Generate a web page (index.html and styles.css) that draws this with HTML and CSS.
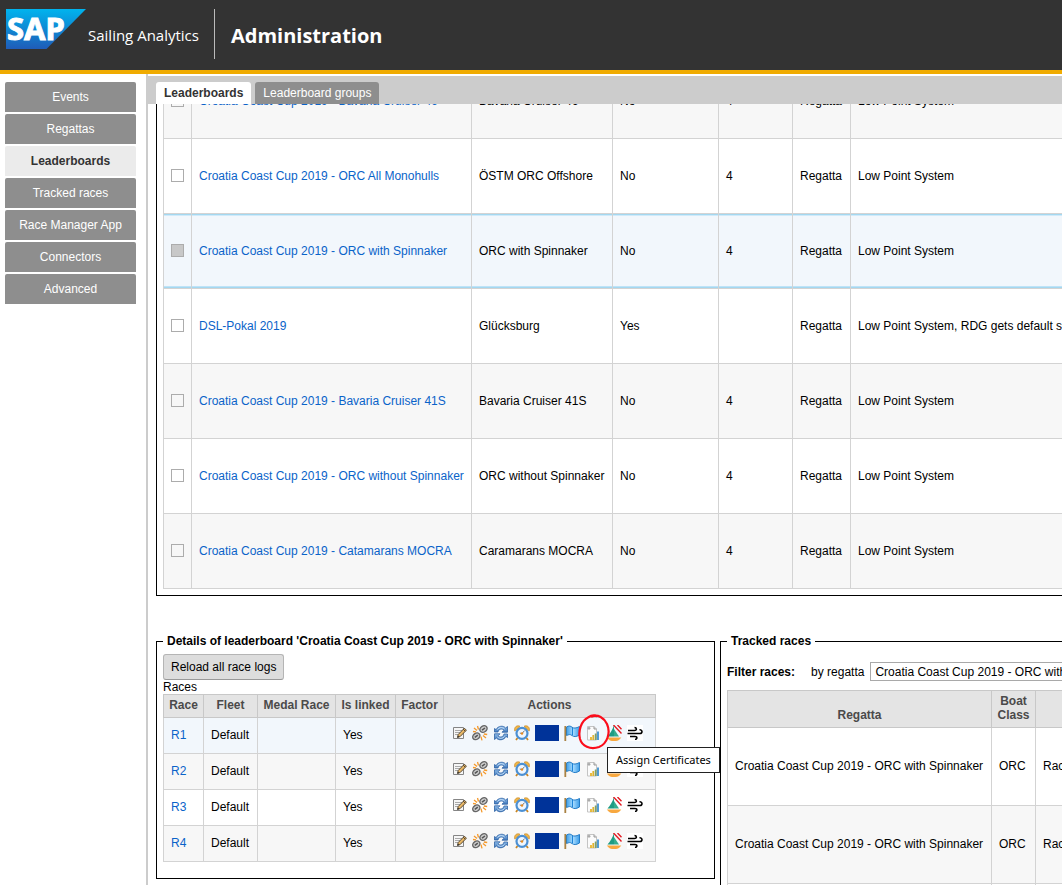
FILE: index.html
```html
<!DOCTYPE html>
<html lang="en">
<head>
<meta charset="utf-8">
<title>Administration</title>
<link rel="stylesheet" href="styles.css">
</head>
<body>
<svg class="sprite" aria-hidden="true">
  <defs>
    <linearGradient id="blue" x1="0" y1="0" x2="0" y2="1"><stop offset="0" stop-color="#8fbdea"/><stop offset="1" stop-color="#3f77bb"/></linearGradient>
    <linearGradient id="cloth" x1="0" y1="0" x2="1" y2="0"><stop offset="0" stop-color="#3f9fe8"/><stop offset=".5" stop-color="#a8dcff"/><stop offset="1" stop-color="#3b9ce8"/></linearGradient>
  </defs>
  <symbol id="edit" viewBox="0 0 16 16">
    <path d="M2.500 2.500h10v11h-10z" fill="#f6f6f6" stroke="#858585"/>
    <path d="M4 5.500h7M4 7.500h5M4 9.500h3" stroke="#aaa"/>
    <path d="M6.500 12.500l.7-3 6.200-6.300 2 2-6.200 6.300z" fill="#e9b866" stroke="#4a3c2a" stroke-width=".9"/>
    <path d="M6.500 12.500l.4-1.700 1.400 1.200z" fill="#222"/>
    <path d="M12.300 4.200l2 2" stroke="#4a3c2a"/>
  </symbol>
  <symbol id="unlink" viewBox="0 0 16 16">
    <g fill="#ccc" stroke="#666" stroke-width="1.400"><ellipse cx="11.500" cy="4" rx="3.800" ry="3" transform="rotate(-35 11.500 4)"/><ellipse cx="4.300" cy="11.300" rx="3.800" ry="3" transform="rotate(-35 4.300 11.300)"/></g>
    <path d="M10 5.200l3-2.200M2.800 12.400l3-2.200" stroke="#555" stroke-width="1.500"/>
    <path d="M2 3l3 2.500M5.500 1l1 3.500M1 6.500l3 .3M14 13l-3-2.500M10 15.300l-1-3.600M15.200 9.500l-3.400-.5" stroke="#f59a2c" stroke-width="1.300"/>
  </symbol>
  <symbol id="refresh" viewBox="0 0 16 16">
    <path d="M1.500 7V3.500L3 4.600C5 .7 10.500 .2 12.600 3L14.500 1.500V7.200H9L11 5.200C9 3 5.500 4 5 7z" fill="url(#blue)" stroke="#2d62a5" stroke-width=".8"/>
    <path d="M14.500 9V12.500L13 11.400C11 15.300 5.500 15.800 3.400 13L1.500 14.500V8.800H7L5 10.800C7 13 10.500 12 11 9z" fill="url(#blue)" stroke="#2d62a5" stroke-width=".8"/>
    <path d="M4.500 4.500C6 2.300 9.500 2 11.500 4M11.500 11.500C10 13.700 6.500 14 4.500 12" fill="none" stroke="#c9e2fa"/>
  </symbol>
  <symbol id="clock" viewBox="0 0 16 16">
    <path d="M3.500 13l-1.500 2M12.500 13l1.500 2" stroke="#c98421" stroke-width="1.800"/>
    <path d="M.8 6C-.5 2.500 3 -.5 6 1.300zM15.200 6C16.500 2.500 13 -.5 10 1.300z" fill="#efb648" stroke="#c98a28" stroke-width=".7"/>
    <circle cx="8" cy="8.300" r="5.500" fill="#eef6ff" stroke="#4c90d3" stroke-width="2.200"/>
    <path d="M8 8.600l2.500-3M8 8.600L5.800 8" stroke="#777" fill="none"/>
    <circle cx="8" cy="8.500" r="1.200" fill="#e58a20"/>
  </symbol>
  <symbol id="flag" viewBox="0 0 16 16">
    <path d="M2.500 2C5 .5 6.500 1 8 2.200S12 3.500 15.500 1.500V10C12 12 10 12 8 10.500S5 9.500 2.500 10.500z" fill="url(#cloth)" stroke="#237cc7"/>
    <path d="M8.500 3v7" stroke="#1d83d8"/>
    <path d="M1.300 1v15" stroke="#a98243" stroke-width="1.800"/>
  </symbol>
  <symbol id="certificate" viewBox="0 0 16 16">
    <path d="M2.500 1.500h6.500l2.500 2.500v11h-9z" fill="#fbfbfb" stroke="#c4c4c4"/>
    <path d="M9 1.500v2.500h2.500" fill="#ddd" stroke="#999"/>
    <circle cx="4" cy="3.300" r="1.400" fill="#aaa"/>
    <path d="M6 15v-3" stroke="#e7b52c" stroke-width="1.800"/>
    <path d="M8.300 15v-5" stroke="#dfb32f" stroke-width="1.800"/>
    <path d="M10.700 15V8.500" stroke="#7da06a" stroke-width="1.800"/>
    <path d="M13 15V6.500" stroke="#3d8fd0" stroke-width="1.800"/>
  </symbol>
  <symbol id="boat" viewBox="0 0 16 16">
    <path d="M8 0v11.500H1.500C4 8.500 6.500 5 8 0z" fill="#1f9c84"/>
    <path d="M8 4l5 7.500H8z" fill="#35ad8e"/>
    <path d="M.8 12.500h14.500C13.500 15.500 11 16 8 16S2.800 15.500.8 12.500z" fill="#f8a83f"/>
    <path d="M7.500 0l8 8.500M11.500 0l4 4.300" stroke="#e31b23" stroke-width="1.400"/>
  </symbol>
  <symbol id="wind" viewBox="0 0 16 16">
    <path d="M0 0h16v16H0z" fill="#fff"/>
    <path d="M1 5.500h6.500c2.600 0 2.400-3 0-3M.5 8.500h12.500c2.800 0 2.600-4-.5-3.700M3 11.500h5c2.600 0 2.400 3 0 2.800" fill="none" stroke="#000" stroke-width="1.600"/>
  </symbol>
</svg>

<header class="masthead">
  <svg class="logo" viewBox="0 0 80 40" role="img" aria-label="SAP">
    <defs><linearGradient id="sap" x1="0" y1="0" x2="0" y2="1"><stop offset="0" stop-color="#00b4ee"/><stop offset="1" stop-color="#1f5cb8"/></linearGradient></defs>
    <path d="M0 0h80L40.500 40H0z" fill="url(#sap)"/>
    <text class="logo-text" x="1" y="31">SAP</text>
  </svg>
  <span class="product">Sailing Analytics</span>
  <h1 class="page-title">Administration</h1>
</header>

<div class="layout">
  <nav class="side">
    <a class="side-link" href="#events">Events</a>
    <a class="side-link" href="#regattas">Regattas</a>
    <a class="side-link side-current" href="#leaderboards">Leaderboards</a>
    <a class="side-link" href="#tracked">Tracked races</a>
    <a class="side-link" href="#manager">Race Manager App</a>
    <a class="side-link" href="#connectors">Connectors</a>
    <a class="side-link" href="#advanced">Advanced</a>
  </nav>

  <main class="main">
    <div class="tabs" role="tablist">
      <button class="tab tab-current" role="tab" aria-selected="true">Leaderboards</button>
      <button class="tab" role="tab" aria-selected="false">Leaderboard groups</button>
    </div>
    <div class="content">
      <section class="boards">
        <table class="grid boards-table">
          <colgroup><col class="w-check"><col class="w-name"><col class="w-regatta"><col class="w-yes"><col class="w-count"><col class="w-type"><col class="w-score"></colgroup>
          <tbody>
            <tr class="alt"><td><input class="check" type="checkbox" aria-label="Select Bavaria Cruiser 46"></td><td><a href="#b1">Croatia Coast Cup 2019 - Bavaria Cruiser 46</a></td><td>Bavaria Cruiser 46</td><td>No</td><td>4</td><td>Regatta</td><td>Low Point System</td></tr>
            <tr><td><input class="check" type="checkbox" aria-label="Select ORC All Monohulls"></td><td><a href="#b2">Croatia Coast Cup 2019 - ORC All Monohulls</a></td><td>ÖSTM ORC Offshore</td><td>No</td><td>4</td><td>Regatta</td><td>Low Point System</td></tr>
            <tr class="selected"><td><input class="check" type="checkbox" checked aria-label="Select ORC with Spinnaker"></td><td><a href="#b3">Croatia Coast Cup 2019 - ORC with Spinnaker</a></td><td>ORC with Spinnaker</td><td>No</td><td>4</td><td>Regatta</td><td>Low Point System</td></tr>
            <tr><td><input class="check" type="checkbox" aria-label="Select DSL-Pokal 2019"></td><td><a href="#b4">DSL-Pokal 2019</a></td><td>Glücksburg</td><td>Yes</td><td></td><td>Regatta</td><td>Low Point System, RDG gets default score</td></tr>
            <tr class="alt"><td><input class="check" type="checkbox" aria-label="Select Bavaria Cruiser 41S"></td><td><a href="#b5">Croatia Coast Cup 2019 - Bavaria Cruiser 41S</a></td><td>Bavaria Cruiser 41S</td><td>No</td><td>4</td><td>Regatta</td><td>Low Point System</td></tr>
            <tr><td><input class="check" type="checkbox" aria-label="Select ORC without Spinnaker"></td><td><a href="#b6">Croatia Coast Cup 2019 - ORC without Spinnaker</a></td><td>ORC without Spinnaker</td><td>No</td><td>4</td><td>Regatta</td><td>Low Point System</td></tr>
            <tr class="alt"><td><input class="check" type="checkbox" aria-label="Select Catamarans MOCRA"></td><td><a href="#b7">Croatia Coast Cup 2019 - Catamarans MOCRA</a></td><td>Caramarans MOCRA</td><td>No</td><td>4</td><td>Regatta</td><td>Low Point System</td></tr>
          </tbody>
        </table>
      </section>

      <div class="lower">
        <fieldset class="panel details">
          <legend>Details of leaderboard 'Croatia Coast Cup 2019 - ORC with Spinnaker'</legend>
          <button class="reload">Reload all race logs</button>
          <div class="caption">Races</div>
          <table class="grid races-table">
            <colgroup><col class="w-race"><col class="w-fleet"><col class="w-medal"><col class="w-linked"><col class="w-factor"><col class="w-actions"></colgroup>
            <thead><tr><th>Race</th><th>Fleet</th><th>Medal Race</th><th>Is linked</th><th>Factor</th><th>Actions</th></tr></thead>
            <tbody>
              <tr class="tint"><td><a href="#r1">R1</a></td><td>Default</td><td></td><td>Yes</td><td></td><td>
                <div class="actions">
                  <button class="act" aria-label="Edit"><svg><use href="#edit"/></svg></button><button class="act" aria-label="Unlink"><svg><use href="#unlink"/></svg></button><button class="act" aria-label="Refresh"><svg><use href="#refresh"/></svg></button><button class="act" aria-label="Set start time"><svg><use href="#clock"/></svg></button><button class="act act-blue" aria-label="Finish times"></button><button class="act" aria-label="Flags"><svg><use href="#flag"/></svg></button>
                  <span class="marked"><button class="act" aria-label="Assign Certificates"><svg><use href="#certificate"/></svg></button>
                    <svg class="ring" viewBox="0 0 32 38" aria-hidden="true"><path d="M14 3.500C20 1 26 5 29 11C33 20 29 31 21 34C12 37 4 33 2 26C0 18 3 8 10 4.500C13 2.500 16 2 18.500 3" fill="none" stroke="#fb0d1b" stroke-width="2.200" stroke-linecap="round"/></svg>
                    <span class="tip" role="tooltip">Assign Certificates</span></span>
                  <button class="act" aria-label="Boats"><svg><use href="#boat"/></svg></button><button class="act" aria-label="Wind"><svg><use href="#wind"/></svg></button>
                </div></td></tr>
              <tr class="alt"><td><a href="#r2">R2</a></td><td>Default</td><td></td><td>Yes</td><td></td><td>
                <div class="actions">
                  <button class="act" aria-label="Edit"><svg><use href="#edit"/></svg></button><button class="act" aria-label="Unlink"><svg><use href="#unlink"/></svg></button><button class="act" aria-label="Refresh"><svg><use href="#refresh"/></svg></button><button class="act" aria-label="Set start time"><svg><use href="#clock"/></svg></button><button class="act act-blue" aria-label="Finish times"></button><button class="act" aria-label="Flags"><svg><use href="#flag"/></svg></button><button class="act" aria-label="Assign Certificates"><svg><use href="#certificate"/></svg></button><button class="act" aria-label="Boats"><svg><use href="#boat"/></svg></button><button class="act" aria-label="Wind"><svg><use href="#wind"/></svg></button>
                </div></td></tr>
              <tr><td><a href="#r3">R3</a></td><td>Default</td><td></td><td>Yes</td><td></td><td>
                <div class="actions">
                  <button class="act" aria-label="Edit"><svg><use href="#edit"/></svg></button><button class="act" aria-label="Unlink"><svg><use href="#unlink"/></svg></button><button class="act" aria-label="Refresh"><svg><use href="#refresh"/></svg></button><button class="act" aria-label="Set start time"><svg><use href="#clock"/></svg></button><button class="act act-blue" aria-label="Finish times"></button><button class="act" aria-label="Flags"><svg><use href="#flag"/></svg></button><button class="act" aria-label="Assign Certificates"><svg><use href="#certificate"/></svg></button><button class="act" aria-label="Boats"><svg><use href="#boat"/></svg></button><button class="act" aria-label="Wind"><svg><use href="#wind"/></svg></button>
                </div></td></tr>
              <tr class="alt"><td><a href="#r4">R4</a></td><td>Default</td><td></td><td>Yes</td><td></td><td>
                <div class="actions">
                  <button class="act" aria-label="Edit"><svg><use href="#edit"/></svg></button><button class="act" aria-label="Unlink"><svg><use href="#unlink"/></svg></button><button class="act" aria-label="Refresh"><svg><use href="#refresh"/></svg></button><button class="act" aria-label="Set start time"><svg><use href="#clock"/></svg></button><button class="act act-blue" aria-label="Finish times"></button><button class="act" aria-label="Flags"><svg><use href="#flag"/></svg></button><button class="act" aria-label="Assign Certificates"><svg><use href="#certificate"/></svg></button><button class="act" aria-label="Boats"><svg><use href="#boat"/></svg></button><button class="act" aria-label="Wind"><svg><use href="#wind"/></svg></button>
                </div></td></tr>
            </tbody>
          </table>
        </fieldset>

        <fieldset class="panel tracked">
          <legend>Tracked races</legend>
          <div class="filter">
            <strong>Filter races:</strong>
            <label class="filter-label" for="regatta">by regatta</label>
            <select class="filter-select" id="regatta"><option>Croatia Coast Cup 2019 - ORC with Spinnaker</option></select>
          </div>
          <table class="grid tracked-table">
            <colgroup><col class="w-tracked"><col class="w-class"><col class="w-rest"></colgroup>
            <thead><tr><th>Regatta</th><th>Boat Class</th><th></th></tr></thead>
            <tbody>
              <tr><td>Croatia Coast Cup 2019 - ORC with Spinnaker</td><td>ORC</td><td>Race 1</td></tr>
              <tr class="alt"><td>Croatia Coast Cup 2019 - ORC with Spinnaker</td><td>ORC</td><td>Race 2</td></tr>
              <tr><td></td><td></td><td></td></tr>
            </tbody>
          </table>
        </fieldset>
      </div>
    </div>
  </main>
</div>
</body>
</html>
```

FILE: styles.css
```css
* { box-sizing: border-box; }
body {
  margin: 0;
  height: 100vh;
  display: flex;
  flex-direction: column;
  overflow: hidden;
  background: #fff;
  color: #000;
  font: 12px/14px "Liberation Sans", Arial, sans-serif;
}
button, select, input { font: inherit; margin: 0; }
a { color: #0a63c9; text-decoration: none; }
.sprite { position: absolute; width: 0; height: 0; }

.masthead {
  flex: none;
  display: flex;
  align-items: center;
  height: 74px;
  padding: 0 6px 2px;
  background: #333;
  border-bottom: 4px solid #f0ab00;
  color: #fff;
  font-family: "Open Sans", sans-serif;
}
.logo { width: 80px; height: 40px; margin-bottom: 10px; }
.logo-text {
  font: bold 31px "Noto Sans", sans-serif;
  fill: #fff;
  stroke: #fff;
  stroke-width: 1px;
}
.product { font-size: 15px; line-height: 48px; padding: 2px 15px 0 2px; border-right: 1px solid #bbb; }
.page-title { margin: 0; padding: 4px 0 0 16px; font-size: 20px; line-height: 48px; }

.layout { flex: 1; display: flex; min-height: 0; }
.side { flex: none; width: 146px; padding: 8px 10px 0 5px; display: flex; flex-direction: column; gap: 2px; }
.side-link {
  padding: 8px 0;
  background: #8e8e8e;
  border-radius: 2px 2px 0 0;
  color: #fff;
  text-align: center;
}
.side-current { background: #ebebeb; color: #333; font-weight: bold; }

.main { flex: 1; min-width: 0; display: flex; flex-direction: column; border-left: 2px solid #ccc; padding-top: 2px; }
.tabs { flex: none; display: flex; gap: 4px; padding: 6px 8px 0; background: #ccc; }
.tab { padding: 4px 8px; border: 0; border-radius: 3px 3px 0 0; background: #8e8e8e; color: #fff; }
.tab-current { background: #fff; color: #333; font-weight: bold; }
.content { flex: 1; min-height: 0; overflow: hidden; padding-left: 8px; }

.grid { border-collapse: collapse; table-layout: fixed; }
.grid td, .grid th { border: 1px solid #d3d3d3; padding: 0 7px; }
.grid th { background: #e4e4e4; border-color: #c8c8c8; color: #4b4a4a; }
.alt { background: #f7f7f7; }
.tint { background: #f2f7fc; }

/* The list is scrolled, so its first row is partly under the tab bar. */
.boards { margin-top: -41px; padding: 0 0 6px 6px; border: 1px solid #000; border-width: 0 0 1px 1px; }
.boards-table { width: 1080px; }
.boards-table td { height: 75px; white-space: nowrap; }
.selected { background: #f2f7fc; }
.selected td { box-shadow: inset 0 1px #a4d8f0, inset 0 -1px #a4d8f0, inset 0 2px #d0eafa, inset 0 -2px #bfe3f7; }
.check {
  display: block;
  appearance: none;
  width: 13px;
  height: 13px;
  margin-bottom: 2px;
  border: 1px solid #acacac;
  background: transparent;
}
.check:checked { background: #c8c8c8; }
.w-check { width: 28px; }
.w-name { width: 280px; }
.w-regatta { width: 141px; }
.w-yes { width: 106px; }
.w-count { width: 74px; }
.w-type { width: 58px; }

.lower { display: grid; grid-template-columns: minmax(559px, auto) 1fr; gap: 5px; align-items: start; margin-top: 38px; }
.panel { min-width: 0; margin: 0; padding: 6px; border: 1px solid #000; }
.panel legend { padding: 0 4px; font-weight: bold; }
.details { padding-bottom: 16px; }
.reload {
  display: block;
  padding: 5px 7px;
  border: 1px solid #b5b5b5;
  border-bottom-color: #999;
  border-radius: 3px;
  background: #ddd;
  color: #000;
}
.caption { line-height: 14px; }
.races-table { width: 493px; }
.races-table th { height: 23px; padding: 0 0 2px; }
.races-table td { height: 36px; padding-bottom: 2px; }
.w-race { width: 40px; }
.w-fleet { width: 54px; }
.w-medal { width: 78px; }
.w-linked { width: 60px; }
.w-factor { width: 48px; }
.w-actions { width: 212px; }

.actions { display: flex; align-items: center; gap: 5px; padding-bottom: 3px; }
.act { display: block; width: 16px; height: 16px; padding: 0; border: 0; background: transparent; }
.act svg { display: block; width: 16px; height: 16px; }
.act-blue { width: 24px; background: #003399; }
.marked { position: relative; }
.ring { position: absolute; left: -7px; top: -12px; width: 32px; height: 38px; z-index: 1; }
.tip {
  position: absolute;
  left: 22px;
  top: 22px;
  z-index: 2;
  padding: 3px 8px 4px;
  border: 1px solid #222;
  background: #fff;
  font: 11px/17px "Noto Sans", sans-serif;
  white-space: nowrap;
}

.tracked { border-right: 0; padding-top: 14px; }
.filter { display: flex; align-items: center; padding-bottom: 9px; white-space: nowrap; }
.filter-label { padding: 0 6px 0 16px; }
.filter-select { flex: none; width: 280px; height: 19px; padding: 0 4px; border: 1px solid #a9a9a9; border-radius: 0; background: #fff; color: #000; appearance: none; }
.tracked-table { width: 560px; }
.tracked-table th { height: 37px; padding: 0 3px 5px; vertical-align: bottom; }
.tracked-table td { height: 78px; padding-bottom: 2px; white-space: nowrap; }
.w-tracked { width: 264px; }
.w-class { width: 44px; }
```
